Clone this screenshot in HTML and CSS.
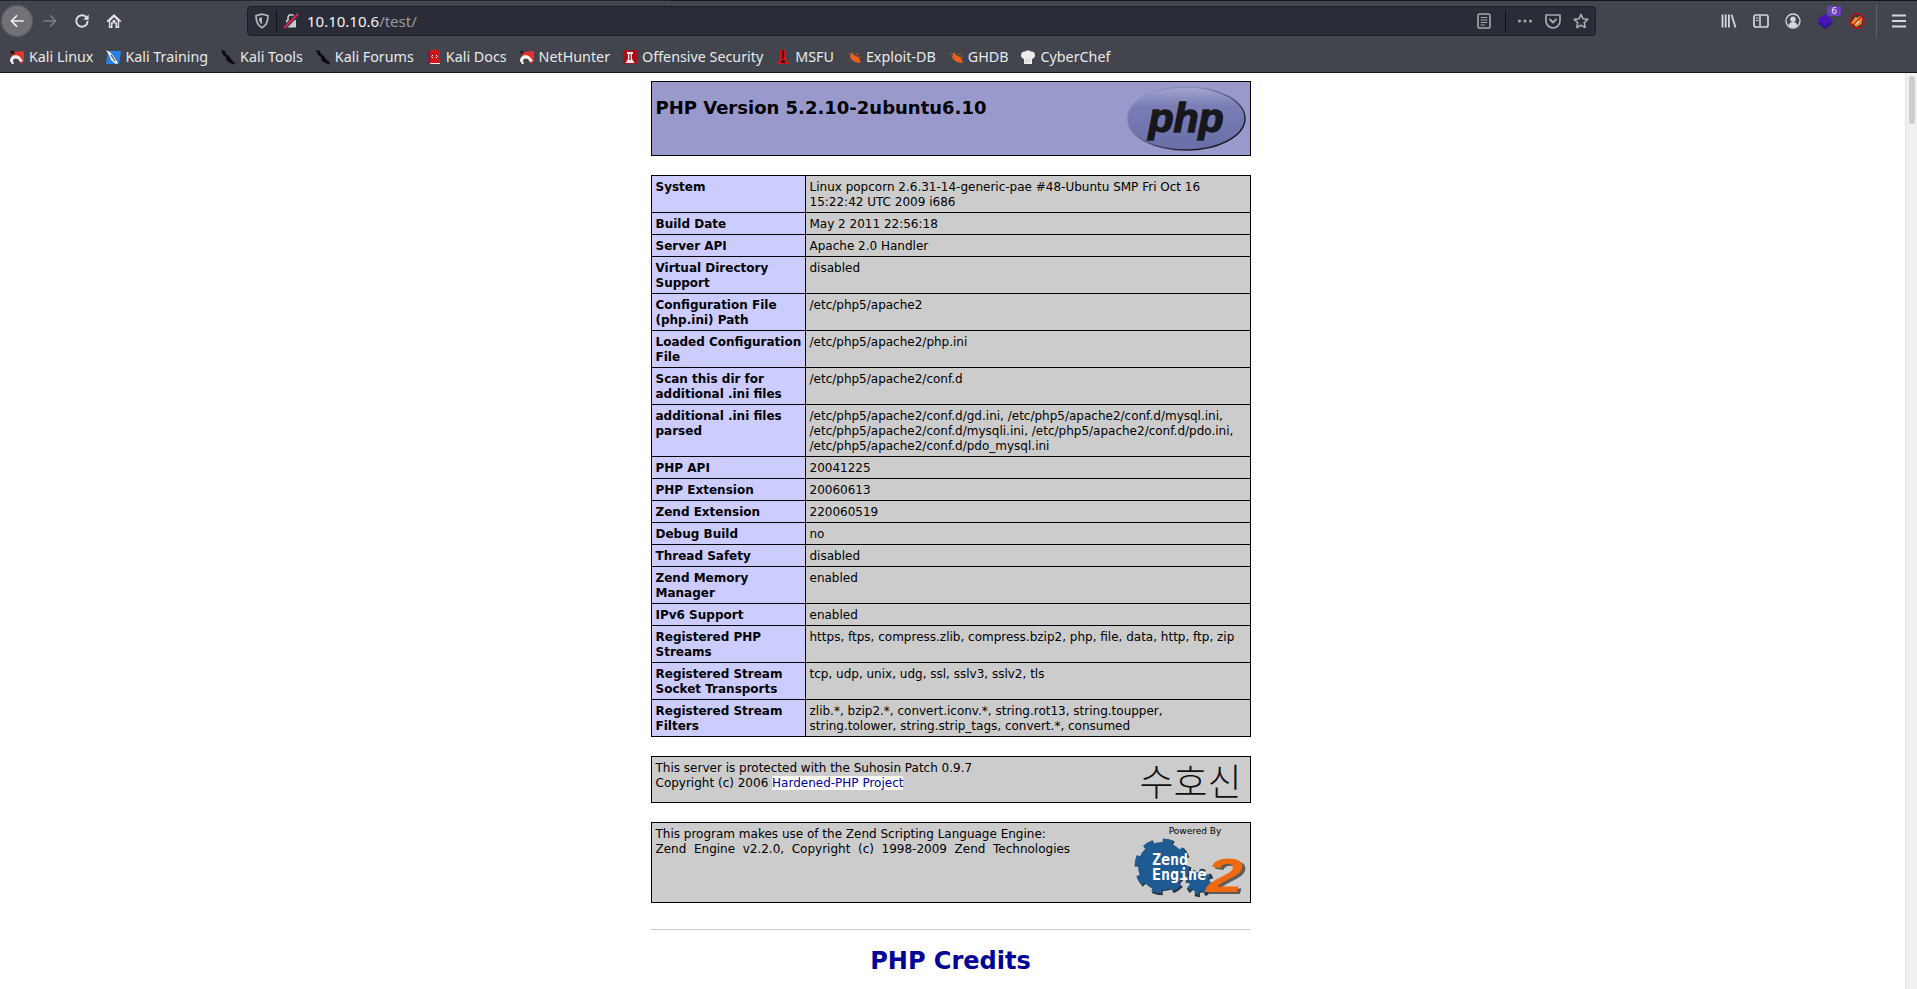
FILE: index.html
```html
<!DOCTYPE html>
<html lang="en">
<head>
  <meta charset="UTF-8">
  <title>phpinfo()</title>
  <link rel="stylesheet" href="styles.css">
</head>
<body>

  <div class="tabline"><span class="tabline-left"></span><span class="tabline-right"></span></div>

  <div class="toolbar">
    <div class="nav-btn back">
      <svg viewBox="0 0 18 18" class="icon"><path d="M16 9H3M8.5 3.2 2.7 9l5.8 5.8" fill="none" stroke="#f0f0f2" stroke-width="1.8" stroke-linecap="round" stroke-linejoin="round"/></svg>
    </div>
    <div class="nav-btn">
      <svg viewBox="0 0 18 18" class="icon"><path d="M2 9h13M9.5 3.2 15.3 9l-5.8 5.8" fill="none" stroke="#7d7f84" stroke-width="1.6" stroke-linecap="round" stroke-linejoin="round"/></svg>
    </div>
    <div class="nav-btn">
      <svg viewBox="0 0 16 16" class="icon"><path d="M13.6 8.6A5.7 5.7 0 1 1 11.8 3.8" fill="none" stroke="#e2e2e4" stroke-width="1.9" stroke-linecap="round"/><path d="M14.6 1.6v5.2H9.4z" fill="#e2e2e4"/></svg>
    </div>
    <div class="nav-btn">
      <svg viewBox="0 0 16 16" class="icon"><path d="M8 1 .6 8l1.2 1.2 1-.9V15h3.7v-4.4h3V15h3.7V8.3l1 .9L15.400 8z" fill="#e2e2e4"/><path d="M4.300 7.700 8 4.200l3.700 3.500v5.800h-.7V9.300H5v4.200h-.7z" fill="#42454d"/><rect x="6.600" y="7" width="2.800" height="2.300" fill="#e2e2e4"/></svg>
    </div>

    <div class="urlbar">
      <svg viewBox="0 0 16 16" class="url-icon shield"><path d="M8 1.200 2 2.600c0 5 .6 9.500 6 12.200 5.400-2.700 6-7.200 6-12.200z" fill="none" stroke="#b5b6b9" stroke-width="1.700"/><path d="M8 4.200 5 5c0 2.500.4 4.600 3 6.200z" fill="#b5b6b9"/></svg>
      <span class="url-sep"></span>
      <svg viewBox="0 0 16 16" class="url-icon lock"><path d="M3 7h10v7.500H3z" fill="#c9cacd"/><path d="M5 7V4.800a3 3 0 0 1 6 0V7" fill="none" stroke="#c9cacd" stroke-width="1.600"/><path d="M1 15 15 1" stroke="#2a2c37" stroke-width="4"/><path d="M1 15 15 1" stroke="#e22850" stroke-width="1.800"/></svg>
      <span class="url-text">10.10.10.6<span class="url-path">/test/</span></span>
      <div class="url-actions">
        <svg viewBox="0 0 16 16" class="url-icon"><rect x="2" y="1" width="12" height="14" rx="1.500" fill="none" stroke="#a9aaae" stroke-width="1.600"/><path d="M4.700 4.500h6.600M4.700 7h6.600M4.700 9.500h6.600M4.700 12h4" stroke="#a9aaae" stroke-width="1.100"/></svg>
        <span class="url-sep"></span>
        <svg viewBox="0 0 16 16" class="url-icon dots"><circle cx="2.500" cy="8" r="1.500" fill="#a9aaae"/><circle cx="8" cy="8" r="1.500" fill="#a9aaae"/><circle cx="13.500" cy="8" r="1.500" fill="#a9aaae"/></svg>
        <svg viewBox="0 0 16 16" class="url-icon"><path d="M1 2h14v6a7 7 0 0 1-14 0z" fill="none" stroke="#a9aaae" stroke-width="1.700" stroke-linejoin="round"/><path d="m5 6.500 3 3 3-3" fill="none" stroke="#a9aaae" stroke-width="1.800" stroke-linecap="round" stroke-linejoin="round"/></svg>
        <svg viewBox="0 0 16 16" class="url-icon"><path d="m8 1.400 2 4.400 4.800.6-3.500 3.300.9 4.800L8 12.200l-4.200 2.300.9-4.800L1.200 6.400 6 5.800z" fill="none" stroke="#a9aaae" stroke-width="1.600" stroke-linejoin="round"/></svg>
      </div>
    </div>

    <div class="nav-btn">
      <svg viewBox="0 0 16 16" class="icon"><path d="M1.500 1.500v13M4.700 1.500v13M7.900 1.500v13" stroke="#d6d7d9" stroke-width="1.800"/><path d="m10.600 1.800 3.900 12.700" stroke="#d6d7d9" stroke-width="1.800"/></svg>
    </div>
    <div class="nav-btn">
      <svg viewBox="0 0 16 16" class="icon"><rect x="1" y="2" width="14" height="12" rx="2" fill="none" stroke="#d6d7d9" stroke-width="1.700"/><path d="M7 2.500v11" stroke="#d6d7d9" stroke-width="1.500"/><path d="M3 5h2.500M3 7.500h2.500" stroke="#d6d7d9" stroke-width="1.100"/></svg>
    </div>
    <div class="nav-btn">
      <svg viewBox="0 0 16 16" class="icon"><circle cx="8" cy="8" r="7" fill="none" stroke="#d6d7d9" stroke-width="1.300"/><circle cx="8" cy="6.300" r="2.700" fill="#d6d7d9"/><path d="M3.400 12.600c.6-2.500 2.500-3.500 4.600-3.500s4 1 4.600 3.500A6 6 0 0 1 8 14.500a6 6 0 0 1-4.600-1.900z" fill="#d6d7d9"/></svg>
    </div>
    <div class="nav-btn ext">
      <svg viewBox="0 0 16 16" class="icon"><path d="M8 5.500 16 10.500 8 16 0 10.500z" fill="#2d1b8c"/><path d="M8 1 16 7 8 13 0 7z" fill="#4a12b8"/></svg>
      <span class="ext-badge">6</span>
    </div>
    <div class="nav-btn">
      <svg viewBox="0 0 16 16" class="icon"><circle cx="8" cy="8" r="7" fill="#33353c"/><path d="M2 10 6 4l3 .5 2-2 2.500 3-1 5.500-5 3z" fill="#e98a1f"/><path d="M4.500 10 9 6l1.500 3-3.500 3z" fill="#f6d9a6"/><circle cx="8" cy="8" r="7.200" fill="none" stroke="#c40f1d" stroke-width="1.500"/><path d="M3 13 13 3" stroke="#c40f1d" stroke-width="1.200"/></svg>
    </div>
    <span class="tool-sep"></span>
    <div class="nav-btn menu">
      <svg viewBox="0 0 16 16" class="icon"><path d="M1 2.500h14M1 8h14M1 13.500h14" stroke="#d6d7d9" stroke-width="1.800"/></svg>
    </div>
  </div>

  <div class="bookmarks">
    <span class="bookmark">
      <svg viewBox="0 0 16 16" class="favicon"><path d="M4 3l11-1v10l-3 3-3-5-4-1-3 2z" fill="#e5312f"/><path d="M1 12c0-6 7-7 10-4l3 4-3 1-2-3c-2-1-5-1-5 2l1 3H3z" fill="#f2f2f2"/><path d="M1 3 3 1l3 2.500-2 2z" fill="#1a1a1a"/></svg>
      Kali Linux
    </span>
    <span class="bookmark">
      <svg viewBox="0 0 16 16" class="favicon"><path d="M3 2h13l-2 13H1z" fill="#2a7fe8"/><path d="m1 1 4 2 4 5 4 6-2 1-5-4-2-5z" fill="#f2f2f2"/><path d="m6 6 4 6" stroke="#20242a" stroke-width="1"/></svg>
      Kali Training
    </span>
    <span class="bookmark">
      <svg viewBox="0 0 16 16" class="favicon"><path d="M1 1 5 2l1 3 3 2 2 3 4 4-1 1.500-5-2-3-3V8L3 6z" fill="#0c0c0e"/></svg>
      Kali Tools
    </span>
    <span class="bookmark">
      <svg viewBox="0 0 16 16" class="favicon"><path d="M1 1 5 2l1 3 3 2 2 3 4 4-1 1.500-5-2-3-3V8L3 6z" fill="#0c0c0e"/></svg>
      Kali Forums
    </span>
    <span class="bookmark">
      <svg viewBox="0 0 16 16" class="favicon"><rect x="3" y="1" width="11" height="13" fill="#d3141c"/><rect x="2" y="1.500" width="2" height="13.500" fill="#5b2a44"/><path d="M4 14h10v1H4z" fill="#eee"/><path d="M7 6 5.500 7.500 7 9M10 6l1.500 1.500L10 9" fill="none" stroke="#fff" stroke-width="1"/></svg>
      Kali Docs
    </span>
    <span class="bookmark">
      <svg viewBox="0 0 16 16" class="favicon"><path d="M4 3l11-1v10l-3 3-3-5-4-1-3 2z" fill="#e5312f"/><path d="M1 12c0-6 7-7 10-4l3 4-3 1-2-3c-2-1-5-1-5 2l1 3H3z" fill="#f2f2f2"/><path d="M1 3 3 1l2 3-2 1z" fill="#1a1a1a"/></svg>
      NetHunter
    </span>
    <span class="bookmark">
      <svg viewBox="0 0 16 16" class="favicon"><rect x="1" y="1" width="14" height="14" fill="#a6101a"/><path d="M5 3h6v2h-1v5l2.500 4h-9L6 10V5H5z" fill="#f3eeee"/><path d="M7.300 5h1.400v6H7.300z" fill="#a6101a"/></svg>
      Offensive Security
    </span>
    <span class="bookmark">
      <svg viewBox="0 0 16 16" class="favicon"><path d="M5 1h6v8l3 6H2l3-6z" fill="#d3141c"/><path d="M7.300 1h1.400v9H7.300zM6.500 11h3l.8 3H5.700z" fill="#2a0a0c"/></svg>
      MSFU
    </span>
    <span class="bookmark">
      <svg viewBox="0 0 16 16" class="favicon"><path d="M1 4 5 5l1-2 2 3 4 2 3 5-2 1-4-1-3-2-2-3 1-2z" fill="#e8601c"/><path d="M10 6l3-2M12 9l3-1" stroke="#e8601c" stroke-width=".8"/></svg>
      Exploit-DB
    </span>
    <span class="bookmark">
      <svg viewBox="0 0 16 16" class="favicon"><path d="M1 4 5 5l1-2 2 3 4 2 3 5-2 1-4-1-3-2-2-3 1-2z" fill="#e8601c"/><path d="M10 6l3-2M12 9l3-1" stroke="#e8601c" stroke-width=".8"/></svg>
      GHDB
    </span>
    <span class="bookmark">
      <svg viewBox="0 0 16 16" class="favicon"><path d="M4 15v-5C2 9.500 1 8 1 6c0-2.500 2.500-4 4-3.500C6 1 10 1 11 2.500c2-.5 4 1 4 3.500 0 2-1 3.500-3 4v5z" fill="#eeeeee"/><path d="M6 10v4M9 10v4" stroke="#bdbdbd" stroke-width=".8"/></svg>
      CyberChef
    </span>
  </div>

  <div class="page">
    <div class="viewport">
      <div class="center">

        <table class="info">
          <tr class="h">
            <td>
              <svg viewBox="0 0 120 67" class="php-logo">
                <defs>
                  <linearGradient id="phpFill" x1="0" y1="0" x2="0" y2="1">
                    <stop offset="0" stop-color="#a3a7cd"/>
                    <stop offset="0.3" stop-color="#7a7eb5"/>
                    <stop offset="1" stop-color="#6a6ea8"/>
                  </linearGradient>
                  <linearGradient id="phpEdge" x1="0" y1="0" x2="1" y2="1">
                    <stop offset="0.3" stop-color="#8a8ec0"/>
                    <stop offset="0.8" stop-color="#15151c"/>
                  </linearGradient>
                </defs>
                <ellipse cx="60" cy="33.500" rx="59" ry="31.500" fill="url(#phpFill)" stroke="url(#phpEdge)" stroke-width="1.400"/>
                <text x="60" y="47" class="php-word">php</text>
              </svg>
              <h1 class="version">PHP Version 5.2.10-2ubuntu6.10</h1>
            </td>
          </tr>
        </table>

        <table class="info">
          <colgroup><col class="col-e"><col></colgroup>
          <tr><td class="e">System</td><td class="v">Linux popcorn 2.6.31-14-generic-pae #48-Ubuntu SMP Fri Oct 16 15:22:42 UTC 2009 i686</td></tr>
          <tr><td class="e">Build Date</td><td class="v">May 2 2011 22:56:18</td></tr>
          <tr><td class="e">Server API</td><td class="v">Apache 2.0 Handler</td></tr>
          <tr><td class="e">Virtual Directory Support</td><td class="v">disabled</td></tr>
          <tr><td class="e">Configuration File (php.ini) Path</td><td class="v">/etc/php5/apache2</td></tr>
          <tr><td class="e">Loaded Configuration File</td><td class="v">/etc/php5/apache2/php.ini</td></tr>
          <tr><td class="e">Scan this dir for additional .ini files</td><td class="v">/etc/php5/apache2/conf.d</td></tr>
          <tr><td class="e">additional .ini files parsed</td><td class="v">/etc/php5/apache2/conf.d/gd.ini, /etc/php5/apache2/conf.d/mysql.ini, /etc/php5/apache2/conf.d/mysqli.ini, /etc/php5/apache2/conf.d/pdo.ini, /etc/php5/apache2/conf.d/pdo_mysql.ini</td></tr>
          <tr><td class="e">PHP API</td><td class="v">20041225</td></tr>
          <tr><td class="e">PHP Extension</td><td class="v">20060613</td></tr>
          <tr><td class="e">Zend Extension</td><td class="v">220060519</td></tr>
          <tr><td class="e">Debug Build</td><td class="v">no</td></tr>
          <tr><td class="e">Thread Safety</td><td class="v">disabled</td></tr>
          <tr><td class="e">Zend Memory Manager</td><td class="v">enabled</td></tr>
          <tr><td class="e">IPv6 Support</td><td class="v">enabled</td></tr>
          <tr><td class="e">Registered PHP Streams</td><td class="v">https, ftps, compress.zlib, compress.bzip2, php, file, data, http, ftp, zip</td></tr>
          <tr><td class="e">Registered Stream Socket Transports</td><td class="v">tcp, udp, unix, udg, ssl, sslv3, sslv2, tls</td></tr>
          <tr><td class="e">Registered Stream Filters</td><td class="v">zlib.*, bzip2.*, convert.iconv.*, string.rot13, string.toupper, string.tolower, string.strip_tags, convert.*, consumed</td></tr>
        </table>

        <table class="info">
          <tr>
            <td class="v suhosin">
              <span class="suhosin-logo">수호신</span>
              This server is protected with the Suhosin Patch 0.9.7<br>
              Copyright (c) 2006 <a href="#">Hardened-PHP Project</a>
            </td>
          </tr>
        </table>

        <table class="info">
          <tr>
            <td class="v zend">
              <svg viewBox="0 0 116 72" class="zend-logo">
                <text x="64" y="7" class="zend-powered">Powered By</text>
                <g class="gear-shadow">
                  <circle cx="31" cy="39" r="24" stroke-dasharray="9.400 9.450"/>
                  <circle cx="31" cy="39" r="21"/>
                  <circle cx="68" cy="55" r="10" stroke-dasharray="3.900 3.950"/>
                  <circle cx="68" cy="55" r="9"/>
                </g>
                <g class="gear">
                  <circle cx="31" cy="39" r="24" stroke-dasharray="9.400 9.450"/>
                  <circle cx="31" cy="39" r="21"/>
                  <circle cx="68" cy="55" r="10" stroke-dasharray="3.900 3.950"/>
                  <circle cx="68" cy="55" r="9"/>
                </g>
                <text x="78" y="67" textLength="37" lengthAdjust="spacingAndGlyphs" class="zend-two zend-shadow">2</text>
                <text x="75" y="65" textLength="37" lengthAdjust="spacingAndGlyphs" class="zend-two">2</text>
                <text x="21" y="38" class="zend-word">Zend</text>
                <text x="21" y="53" class="zend-word">Engine</text>
              </svg>
              This program makes use of the Zend Scripting Language Engine:<br>
              <span class="wide-words">Zend Engine v2.2.0, Copyright (c) 1998-2009 Zend Technologies</span>
            </td>
          </tr>
        </table>

        <hr class="rule">
        <h1 class="credits"><a href="#">PHP Credits</a></h1>

      </div>
    </div>
    <div class="scrollbar"><div class="thumb"></div></div>
  </div>

</body>
</html>
```

FILE: styles.css
```css
html, body {
  height: 100%;
}

body {
  margin: 0;
  display: flex;
  flex-direction: column;
  overflow: hidden;
  background-color: #fff;
  font-family: 'DejaVu Sans', sans-serif;
}

/* browser chrome */

.tabline {
  display: flex;
  height: 1px;
  flex: none;
}

.tabline-left {
  width: 670px;
  background-color: #23242b;
}

.tabline-right {
  flex: 1;
  background-color: #15161b;
}

.toolbar {
  display: flex;
  align-items: center;
  flex: none;
  height: 40px;
  padding: 0 2px 0 1px;
  background-color: #42454d;
}

.nav-btn {
  display: flex;
  align-items: center;
  justify-content: center;
  position: relative;
  flex: none;
  width: 32px;
  height: 32px;
}

.back {
  margin-right: 1px;
  border-radius: 50%;
  background-color: #707277;
  box-shadow: inset 0 0 0 1px #55575c;
}

.icon {
  width: 16px;
  height: 16px;
}

.urlbar {
  display: flex;
  align-items: center;
  flex: 1;
  height: 30px;
  margin: 0 117px;
  padding: 0 6px 0 6px;
  box-sizing: border-box;
  background-color: #2a2c37;
  border: 1px solid #1c1d24;
  border-radius: 4px;
}

.url-icon {
  flex: none;
  width: 16px;
  height: 16px;
}

.url-sep {
  flex: none;
  width: 1px;
  height: 22px;
  margin: 0 5px;
  background-color: #101117;
}

.shield {
  margin-right: 1px;
}

.lock {
  margin: 0 8px 0 1px;
}

.url-text {
  flex: 1;
  font: 15px 'Noto Sans', sans-serif;
  color: #f4f4f6;
}

.url-path {
  color: #9a9ba1;
}

.url-actions {
  display: flex;
  align-items: center;
  gap: 12px;
}

.url-actions .url-sep {
  margin: 0 -1px 0 1px;
}

.ext-badge {
  position: absolute;
  top: 1px;
  right: 0;
  width: 14px;
  height: 10px;
  border-radius: 2px;
  background-color: #6a3fc0;
  color: #e8e4f4;
  font: 9px/10px 'DejaVu Sans', sans-serif;
  text-align: center;
}

.tool-sep {
  flex: none;
  width: 1px;
  height: 34px;
  margin-left: 3px;
  background-color: #5e6068;
}

.menu {
  margin-left: 6px;
}

.bookmarks {
  display: flex;
  align-items: center;
  flex: none;
  gap: 12px;
  height: 31px;
  padding-left: 9px;
  background-color: #42454d;
  border-bottom: 1px solid #14151a;
  color: #e8e9eb;
  font: 14.300px 'Noto Sans', sans-serif;
  white-space: nowrap;
}

.bookmark {
  display: flex;
  align-items: center;
  gap: 4px;
}

.favicon {
  flex: none;
  width: 16px;
  height: 16px;
}

/* page */

.page {
  display: flex;
  flex: 1;
  min-height: 0;
}

.viewport {
  flex: 1;
  overflow: hidden;
  padding: 8px 4px 0 0;
}

.center {
  width: 600px;
  margin: 0 auto;
}

.scrollbar {
  flex: none;
  width: 12px;
  background-color: #f0f0f0;
  border-left: 1px solid #e4e4e4;
  box-sizing: border-box;
  padding: 3px 2px 0 3px;
}

.thumb {
  height: 48px;
  border-radius: 4px;
  background-color: #cdcdcd;
}

.info {
  width: 600px;
  margin-bottom: 19px;
  border-collapse: collapse;
  table-layout: fixed;
}

.info td {
  padding: 4px 3px 2px 4px;
  border: 1px solid #000;
  font-size: 12px;
  line-height: 15px;
  vertical-align: baseline;
  color: #000;
}

.col-e {
  width: 154px;
}

.e {
  background-color: #ccccff;
  font-weight: bold;
}

.v {
  background-color: #cccccc;
}

.info .h td {
  padding: 3px 3px 3px 4px;
  background-color: #9999cc;
  font-weight: bold;
}

.version {
  margin: 12px 0;
  font-size: 18px;
  line-height: 21px;
}

.php-logo {
  float: right;
  width: 120px;
  height: 67px;
  margin-right: 1px;
}

.php-word {
  fill: #17171c;
  stroke: #17171c;
  stroke-width: 1.500px;
  font: italic bold 41px 'Liberation Sans', sans-serif;
  text-anchor: middle;
}

.suhosin {
  height: 39px;
}

.suhosin-logo {
  float: right;
  margin-right: 5px;
  font: 300 37px/38px 'Noto Sans CJK KR', sans-serif;
  color: #111;
}

.info a {
  background-color: #fff;
  color: #000099;
  text-decoration: none;
}

.zend {
  height: 73px;
}

.zend-logo {
  float: right;
  width: 116px;
  height: 72px;
  overflow: visible;
}

.wide-words {
  word-spacing: 3.800px;
}

.zend-powered {
  font: 9px 'DejaVu Sans', sans-serif;
  text-anchor: middle;
}

.gear circle,
.gear-shadow circle {
  fill: #1f5a92;
  stroke: #1f5a92;
  stroke-width: 7px;
}

.gear circle:nth-child(even),
.gear-shadow circle:nth-child(even) {
  stroke: none;
}

.gear circle:nth-child(3) {
  stroke-width: 5px;
}

.gear-shadow {
  transform: translate(1px, 1px);
}

.gear-shadow circle {
  fill: #28303a;
  stroke: #28303a;
  stroke-width: 8.500px;
}

.zend-word {
  fill: #fff;
  font: bold 15px 'DejaVu Sans Mono', monospace;
}

.zend-two {
  fill: #f0690f;
  font: italic bold 48px 'Liberation Sans', sans-serif;
}

.zend-shadow {
  fill: #5c5c5c;
}

.rule {
  width: 600px;
  height: 1px;
  margin: 26px 0 0;
  border: 0;
  background-color: #cccccc;
}

.credits {
  margin: 17px 0;
  font-size: 24px;
  text-align: center;
}

.credits a {
  color: #000099;
  text-decoration: none;
}
```
